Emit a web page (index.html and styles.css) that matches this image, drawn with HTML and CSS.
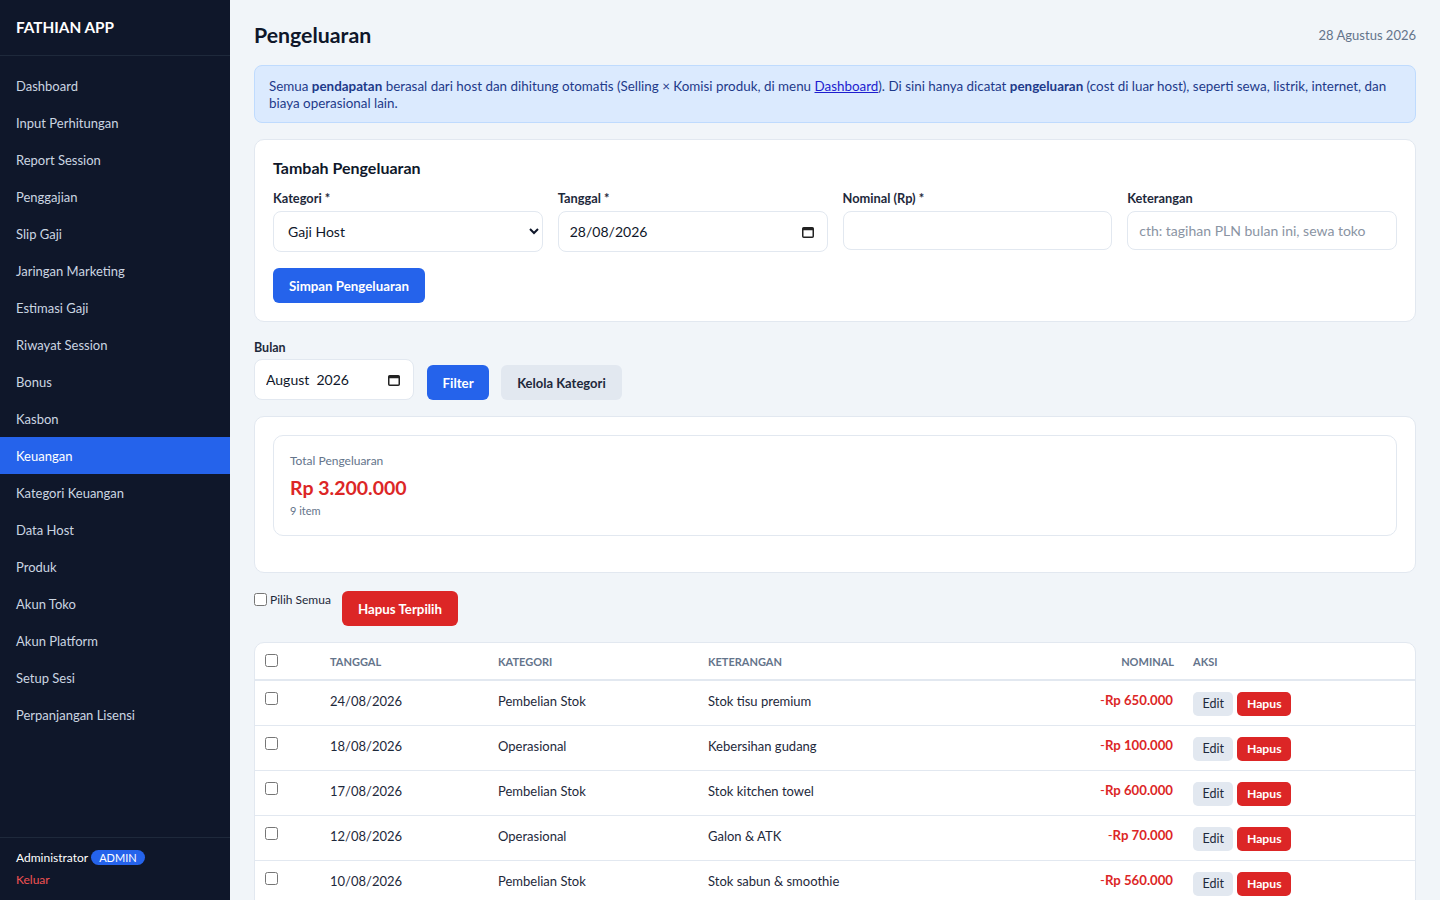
FILE: index.html
```html
<!DOCTYPE html>
<html lang="id">
<head>
<meta charset="UTF-8" />
<meta name="viewport" content="width=device-width,initial-scale=1" />
<title>Pengeluaran - Fathian App</title>
<link rel="stylesheet" href="styles.css">
</head>
<body>
<div class="layout">

  <!-- ===== Sidebar ===== -->
  <aside class="sidebar">
    <div class="brand">FATHIAN APP</div>
    <nav class="nav">
      <a href="#">Dashboard</a>
      <a href="#">Input Perhitungan</a>
      <a href="#">Report Session</a>
      <a href="#">Penggajian</a>
      <a href="#">Slip Gaji</a>
      <a href="#">Jaringan Marketing</a>
      <a href="#">Estimasi Gaji</a>
      <a href="#">Riwayat Session</a>
      <a href="#">Bonus</a>
      <a href="#">Kasbon</a>
      <a href="#" class="active">Keuangan</a>
      <a href="#">Kategori Keuangan</a>
      <a href="#">Data Host</a>
      <a href="#">Produk</a>
      <a href="#">Akun Toko</a>
      <a href="#">Akun Platform</a>
      <a href="#">Setup Sesi</a>
      <a href="#">Perpanjangan Lisensi</a>
    </nav>
    <div class="userBox">
      <div class="userName">Administrator <span class="badge">ADMIN</span></div>
      <a href="#" class="logout">Keluar</a>
    </div>
  </aside>

  <!-- ===== Main ===== -->
  <main class="main">
    <div class="pageHead">
      <h1>Pengeluaran</h1>
      <span class="today">28 Agustus 2026</span>
    </div>

    <div class="infoBox">
      Semua <b>pendapatan</b> berasal dari host dan dihitung otomatis (Selling × Komisi produk, di menu <a href="#">Dashboard</a>). Di sini hanya dicatat <b>pengeluaran</b> (cost di luar host), seperti sewa, listrik, internet, dan biaya operasional lain.
    </div>

    <!-- form tambah -->
    <section class="card">
      <h2>Tambah Pengeluaran</h2>
      <div class="formGrid">
        <div class="field">
          <label>Kategori *</label>
          <select class="ctl ctlTall">
            <option>Gaji Host</option>
            <option>Pembelian Stok</option>
            <option>Operasional</option>
          </select>
        </div>
        <div class="field">
          <label>Tanggal *</label>
          <div class="dateBox">
            <input type="text" value="28/08/2026">
            <svg class="calIcon" viewBox="0 0 12 12" width="12" height="12"><rect x="0.75" y="1.75" width="10.5" height="9.5" rx="1" fill="none" stroke="#222" stroke-width="1.5"/><rect x="0.75" y="1.75" width="10.5" height="2.5" fill="#222"/></svg>
          </div>
        </div>
        <div class="field">
          <label>Nominal (Rp) *</label>
          <input type="text" class="ctl">
        </div>
        <div class="field">
          <label>Keterangan</label>
          <input type="text" class="ctl" placeholder="cth: tagihan PLN bulan ini, sewa toko">
        </div>
      </div>
      <button class="btn btnBlue btnSave">Simpan Pengeluaran</button>
    </section>

    <!-- filter -->
    <div class="filterRow">
      <div class="field">
        <label>Bulan</label>
        <div class="dateBox monthBox">
          <input type="text" value="August  2026">
          <svg class="calIcon" viewBox="0 0 12 12" width="12" height="12"><rect x="0.75" y="1.75" width="10.5" height="9.5" rx="1" fill="none" stroke="#222" stroke-width="1.5"/><rect x="0.75" y="1.75" width="10.5" height="2.5" fill="#222"/></svg>
        </div>
      </div>
      <button class="btn btnBlue btnFilter">Filter</button>
      <button class="btn btnGray">Kelola Kategori</button>
    </div>

    <!-- ringkasan -->
    <section class="card summaryCard">
      <div class="statBox">
        <div class="statLabel">Total Pengeluaran</div>
        <div class="statValue">Rp 3.200.000</div>
        <div class="statNote">9 item</div>
      </div>
    </section>

    <div class="bulkRow">
      <label class="checkAll"><input type="checkbox"> Pilih Semua</label>
      <button class="btn btnRed">Hapus Terpilih</button>
    </div>

    <!-- tabel -->
    <section class="tableCard">
      <table class="dataTable">
        <colgroup>
          <col style="width:64px"><col style="width:168px"><col style="width:210px"><col><col style="width:160px"><col style="width:235px">
        </colgroup>
        <thead>
          <tr>
            <th><input type="checkbox"></th>
            <th>Tanggal</th>
            <th>Kategori</th>
            <th>Keterangan</th>
            <th class="num">Nominal</th>
            <th class="acts">Aksi</th>
          </tr>
        </thead>
        <tbody>
          <tr>
            <td><input type="checkbox"></td><td>24/08/2026</td><td>Pembelian Stok</td><td>Stok tisu premium</td>
            <td class="num"><span class="minus">-</span><b>Rp 650.000</b></td>
            <td class="acts"><button class="mini miniGray">Edit</button><button class="mini miniRed">Hapus</button></td>
          </tr>
          <tr>
            <td><input type="checkbox"></td><td>18/08/2026</td><td>Operasional</td><td>Kebersihan gudang</td>
            <td class="num"><span class="minus">-</span><b>Rp 100.000</b></td>
            <td class="acts"><button class="mini miniGray">Edit</button><button class="mini miniRed">Hapus</button></td>
          </tr>
          <tr>
            <td><input type="checkbox"></td><td>17/08/2026</td><td>Pembelian Stok</td><td>Stok kitchen towel</td>
            <td class="num"><span class="minus">-</span><b>Rp 600.000</b></td>
            <td class="acts"><button class="mini miniGray">Edit</button><button class="mini miniRed">Hapus</button></td>
          </tr>
          <tr>
            <td><input type="checkbox"></td><td>12/08/2026</td><td>Operasional</td><td>Galon &amp; ATK</td>
            <td class="num"><span class="minus">-</span><b>Rp 70.000</b></td>
            <td class="acts"><button class="mini miniGray">Edit</button><button class="mini miniRed">Hapus</button></td>
          </tr>
          <tr>
            <td><input type="checkbox"></td><td>10/08/2026</td><td>Pembelian Stok</td><td>Stok sabun &amp; smoothie</td>
            <td class="num"><span class="minus">-</span><b>Rp 560.000</b></td>
            <td class="acts"><button class="mini miniGray">Edit</button><button class="mini miniRed">Hapus</button></td>
          </tr>
          <tr>
            <td><input type="checkbox"></td><td>05/08/2026</td><td>Operasional</td><td>Sewa gudang</td>
            <td class="num"><span class="minus">-</span><b>Rp 500.000</b></td>
            <td class="acts"><button class="mini miniGray">Edit</button><button class="mini miniRed">Hapus</button></td>
          </tr>
          <tr>
            <td><input type="checkbox"></td><td>03/08/2026</td><td>Operasional</td><td>Tagihan listrik</td>
            <td class="num"><span class="minus">-</span><b>Rp 350.000</b></td>
            <td class="acts"><button class="mini miniGray">Edit</button><button class="mini miniRed">Hapus</button></td>
          </tr>
        </tbody>
      </table>
    </section>
  </main>
</div>
</body>
</html>
```

FILE: styles.css
```css
/* ---------- reset ---------- */
*
{
  box-sizing:border-box;
  margin:0;
  padding:0;
}
body
{
  font-family:"Lato","Liberation Sans",sans-serif;
  font-size:13px;
  color:#0f172a;
  background:#f1f5f9;
  height:100vh;
  overflow:hidden;
}
.layout
{
  display:flex;
  height:100vh;
}

/* ===== Sidebar ===== */
.sidebar
{
  width:230px;
  flex-shrink:0;
  background:#0f172a;
  display:flex;
  flex-direction:column;
}
.brand
{
  height:56px;
  padding:0 16px 1px;
  display:flex;
  align-items:center;
  font-size:15.3px;
  font-weight:700;
  color:#fff;
  border-bottom:1px solid #1e293b;
}
.nav
{
  flex:1;
  padding-top:11px;
  display:flex;
  flex-direction:column;
}
.nav a
{
  height:37px;
  display:flex;
  align-items:center;
  padding:0 16px;
  color:#cbd5e1;
  text-decoration:none;
  font-size:13px;
}
.nav a.active
{
  background:#2563eb;
  color:#fff;
}
.userBox
{
  border-top:1px solid #1e293b;
  padding:12px 16px 13px;
}
.userName
{
  color:#fff;
  font-size:12px;
  display:flex;
  align-items:center;
  gap:3px;
}
.badge
{
  background:#2563eb;
  color:#fff;
  font-size:11px;
  padding:1px 8px;
  border-radius:10px;
}
.logout
{
  display:block;
  margin-top:7px;
  color:#f05252;
  font-size:12px;
  text-decoration:none;
}

/* ===== Main ===== */
.main
{
  flex:1;
  padding:21px 24px 0;
  overflow:hidden;
}
.pageHead
{
  display:flex;
  justify-content:space-between;
  align-items:center;
  height:28px;
}
.pageHead h1
{
  font-size:21.3px;
  font-weight:700;
}
.today
{
  font-size:13px;
  color:#64748b;
}
.infoBox
{
  margin-top:16px;
  background:#dbeafe;
  border:1px solid #bfdbfe;
  border-radius:8px;
  padding:12px 14px 10px;
  color:#1e3a8a;
  font-size:13.4px;
  line-height:17px;
}
.infoBox a{color:#1d1dcf;}

.card
{
  margin-top:16px;
  background:#fff;
  border:1px solid #e2e8f0;
  border-radius:10px;
  padding:18px 18px 18px;
}
.card h2
{
  font-size:16px;
  font-weight:700;
  line-height:20px;
  margin-bottom:12px;
}
.formGrid
{
  display:grid;
  grid-template-columns:repeat(4,1fr);
  gap:15px;
  align-items:start;
}
.field label
{
  display:block;
  font-size:12.8px;
  font-weight:700;
  line-height:16px;
  margin-bottom:5px;
  color:#1e293b;
}
.ctl
{
  width:100%;
  height:39px;
  border:1px solid #e2e8f0;
  border-radius:8px;
  padding:0 11px;
  font-family:inherit;
  font-size:14px;
  color:#0f172a;
  background:#fff;
}
.ctl::placeholder{color:#8a94a3;}
select.ctl{padding:0 10px 0 10px;}
.ctlTall{height:41px;}
.dateBox
{
  position:relative;
  height:41px;
  border:1px solid #e2e8f0;
  border-radius:8px;
  background:#fff;
}
.dateBox input
{
  width:100%;
  height:100%;
  border:none;
  background:transparent;
  padding:0 11px;
  font-family:inherit;
  font-size:14px;
  color:#0f172a;
  white-space:pre;
}
.calIcon
{
  position:absolute;
  right:13px;
  top:14px;
}
.btn
{
  height:35px;
  border:none;
  border-radius:6px;
  padding:0 16px;
  font-family:inherit;
  font-size:13.3px;
  font-weight:700;
  cursor:pointer;
}
.btnBlue{background:#2563eb;color:#fff;}
.btnGray{background:#e2e8f0;color:#1e293b;font-size:13px;}
.btnRed {background:#dc2626;color:#fff;}
.btnSave{margin-top:16px;}
.btnFilter{padding:0 15.5px;}

/* ===== Filter ===== */
.filterRow
{
  margin-top:18px;
  display:flex;
  align-items:flex-end;
  gap:12px;
}
.filterRow .field label{margin-bottom:3px;font-size:12.5px;}
.monthBox{width:160px;margin-right:1px;}

/* ===== Ringkasan ===== */
.summaryCard{padding:18px 18px 36px;}
.statBox
{
  border:1px solid #e2e8f0;
  border-radius:10px;
  padding:16px 16px 15px;
}
.statLabel{font-size:12px;line-height:18px;color:#64748b;}
.statValue
{
  margin-top:4px;
  font-size:19.5px;
  font-weight:700;
  line-height:28px;
  color:#dc2626;
}
.statNote{font-size:11px;line-height:18px;color:#64748b;}

/* ===== Bulk ===== */
.bulkRow
{
  margin-top:18px;
  display:flex;
  align-items:flex-start;
  gap:11px;
}
.checkAll
{
  display:flex;
  align-items:center;
  gap:3px;
  font-size:12px;
  color:#1e293b;
  padding-top:1px;
}
.checkAll input{margin:0;}

/* ===== Tabel ===== */
.tableCard
{
  margin-top:16px;
  background:#fff;
  border:1px solid #e2e8f0;
  border-radius:10px;
  overflow:hidden;
}
.dataTable
{
  width:100%;
  border-collapse:collapse;
  table-layout:fixed;
}
.dataTable th
{
  height:37px;
  padding:0 11px;
  text-align:left;
  font-size:11px;
  font-weight:700;
  text-transform:uppercase;
  color:#64748b;
  border-bottom:2px solid #e2e8f0;
}
.dataTable td
{
  height:45px;
  padding:0 11px 4px;
  font-size:13px;
  color:#1e293b;
  border-bottom:1px solid #e2e8f0;
}
.dataTable th:first-child,
.dataTable td:first-child{padding-left:10px;}
.dataTable td:first-child{padding-bottom:8px;}
.dataTable th:first-child{padding-bottom:2px;}
.dataTable input[type=checkbox]{margin:0;display:block;}
.dataTable .num{text-align:right;padding-right:7px;}
.dataTable th.num{padding-right:6px;}
.dataTable th.acts{padding-left:13px;}
.dataTable td.num{padding-bottom:5px;}
.minus{color:#dc2626;}
.dataTable td.num b{font-size:13.2px;color:#dc2626;}
.dataTable td.acts{padding:2px 12px 0 13px;}
.mini
{
  height:24px;
  border:none;
  border-radius:5px;
  padding:0 9.5px;
  font-family:inherit;
  font-size:12.5px;
  cursor:pointer;
  margin-right:4px;
}
.miniGray{background:#e2e8f0;color:#1e293b;}
.miniRed {background:#dc2626;color:#fff;font-weight:700;font-size:12.2px;}
```
